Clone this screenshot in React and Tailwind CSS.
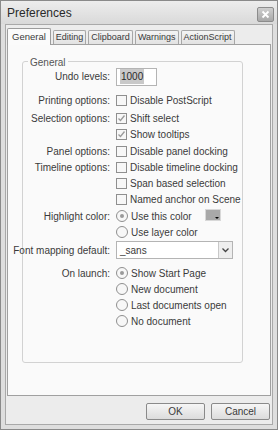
import React from 'react';

const font = { fontFamily: '"Liberation Sans", Arial, sans-serif' };

const Check = ({ checked }) => (
  <span className="w-[11px] h-[11px] border border-[#8f8f8f] bg-[#f7f7f7] flex items-center justify-center shrink-0">
    {checked && (
      <svg width="9" height="9" viewBox="0 0 9 9">
        <path d="M1.5 4.5 L3.5 6.5 L7.5 1.5" fill="none" stroke="#9a9a9a" strokeWidth="1.3" />
      </svg>
    )}
  </span>
);

const Radio = ({ checked }) => (
  <span className="w-[12px] h-[12px] rounded-full border border-[#8f8f8f] bg-[#f7f7f7] flex items-center justify-center shrink-0">
    {checked && <span className="w-[4px] h-[4px] rounded-full bg-[#9a9a9a]" />}
  </span>
);

const Label = ({ children }) => (
  <div className="w-[93px] pr-[6px] shrink-0 flex justify-end whitespace-nowrap">{children}</div>
);

const Row = ({ label, children, className = '' }) => (
  <div className={`flex items-center h-[16px] ${className}`}>
    <Label>{label}</Label>
    <div className="flex items-center gap-[3px]">{children}</div>
  </div>
);

export default function App() {
  const tabs = ['Editing', 'Clipboard', 'Warnings', 'ActionScript'];
  return (
    <div style={font} className="w-[278px] h-[430px] bg-[#8a8a8a] p-px text-[10px] text-[#3a3a3a] overflow-hidden">
      <div className="h-full flex flex-col bg-[#dedede] rounded-t-[4px]">
        {/* title bar */}
        <div className="h-[23px] shrink-0 flex items-center justify-between pl-[6px] pr-[3px] bg-gradient-to-b from-[#ededed] to-[#d9d9d9]">
          <span className="text-[12px] text-[#2a2a2a] pt-[1px]">Preferences</span>
          <div className="w-[17px] h-[15px] mt-[4px] rounded-[2px] border border-[#8c8c8c] bg-gradient-to-b from-[#cfcfcf] to-[#a8a8a8] flex items-center justify-center">
            <svg width="9" height="9" viewBox="0 0 9 9">
              <path d="M1.5 1.5 L7.5 7.5 M7.5 1.5 L1.5 7.5" stroke="#fff" strokeWidth="1.8" />
            </svg>
          </div>
        </div>
        <div className="flex-1 mx-[4px] mb-[4px] border border-[#a9a9a9] bg-[#ececec] flex flex-col px-px">
          {/* tabs */}
          <div className="flex items-end h-[16px] mt-[3px] text-[9px]">
            <div className="h-[17px] px-[4px] border border-b-0 border-[#9c9c9c] bg-[#fbfbfb] flex items-center rounded-t-[2px] relative top-px z-10 text-[9.5px]">General</div>
            {tabs.map((t) => (
              <div key={t} className="h-[14px] px-[2px] ml-[2px] border border-b-0 border-[#a7a7a7] bg-gradient-to-b from-[#f4f4f4] to-[#e2e2e2] flex items-center rounded-t-[2px]">
                {t}
              </div>
            ))}
          </div>
          {/* panel */}
          <div className="h-[352px] border border-[#a0a0a0] bg-[#fafafa] pt-[16px] pl-[14px] pr-[27px]">
            <div className="relative border border-[#d2d2d2] rounded-[3px] h-[302px] pt-[5px]">
              <span className="absolute -top-[7px] left-[5px] px-[2px] bg-[#fafafa] text-[#555]">General</span>
              <div className="flex items-center h-[19px]">
                <Label>Undo levels:</Label>
                <div className="w-[41px] h-[18px] border border-[#b4b4b4] bg-white flex items-center pl-[3px] text-[#2a2a2a]">
                  <span className="bg-[#c9c9c9] px-px">1000</span>
                </div>
              </div>
              <Row label="Printing options:" className="mt-[6px]"><Check /><span>Disable PostScript</span></Row>
              <Row label="Selection options:" className="mt-[2px]"><Check checked /><span>Shift select</span></Row>
              <Row label=""><Check checked /><span>Show tooltips</span></Row>
              <Row label="Panel options:" className="mt-[1px]"><Check /><span>Disable panel docking</span></Row>
              <Row label="Timeline options:"><Check /><span>Disable timeline docking</span></Row>
              <Row label=""><Check /><span>Span based selection</span></Row>
              <Row label=""><Check /><span>Named anchor on Scene</span></Row>
              <Row label="Highlight color:" className="mt-[1px]">
                <Radio checked /><span>Use this color</span>
                <span className="ml-[10px] -mt-[3px] w-[16px] h-[12px] bg-[#a8a8a8] border border-[#d8d8d8] relative">
                  <span className="absolute right-[1px] bottom-[1px] w-0 h-0 border-l-[2px] border-r-[2px] border-t-[2px] border-l-transparent border-r-transparent border-t-black" />
                </span>
              </Row>
              <Row label=""><Radio /><span>Use layer color</span></Row>
              <div className="flex items-center h-[18px] mt-[1px]">
                <Label>Font mapping default:</Label>
                <div className="w-[117px] h-[18px] border border-[#b4b4b4] bg-white flex items-center justify-between pl-[3px]">
                  <span>_sans</span>
                  <span className="w-[14px] h-full border-l border-[#c8c8c8] bg-[#eeeeee] flex items-center justify-center">
                    <svg width="7" height="5" viewBox="0 0 7 5">
                      <path d="M0.5 0.5 L3.5 3.5 L6.5 0.5" fill="none" stroke="#444" strokeWidth="1.3" />
                    </svg>
                  </span>
                </div>
              </div>
              <Row label="On launch:" className="mt-[6px]"><Radio checked /><span>Show Start Page</span></Row>
              <Row label=""><Radio /><span>New document</span></Row>
              <Row label=""><Radio /><span>Last documents open</span></Row>
              <Row label=""><Radio /><span>No document</span></Row>
            </div>
          </div>
          {/* buttons */}
          <div className="flex justify-end gap-[6px] mt-[7px] pr-[1px]">
            <button className="w-[59px] h-[17px] border border-[#8a8a8a] rounded-[2px] bg-gradient-to-b from-[#f6f6f6] to-[#dcdcdc] text-[#3a3a3a]">OK</button>
            <button className="w-[59px] h-[17px] border border-[#8a8a8a] rounded-[2px] bg-gradient-to-b from-[#f6f6f6] to-[#dcdcdc] text-[#3a3a3a]">Cancel</button>
          </div>
        </div>
      </div>
    </div>
  );
}
